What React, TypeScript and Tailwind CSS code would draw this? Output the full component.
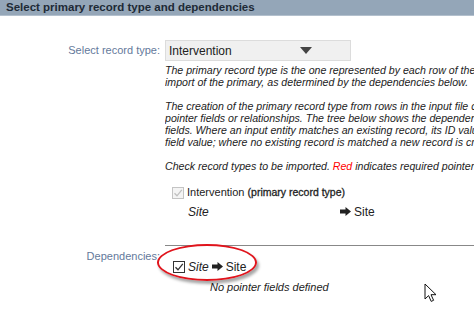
import React from 'react';

const Arrow = () => (
  <svg width="11" height="9" viewBox="0 0 11 9" className="inline-block">
    <path d="M0 2.5h5.5V0L11 4.5 5.5 9V6.5H0z" fill="#222" />
  </svg>
);

const Check: React.FC<{ disabled?: boolean }> = ({ disabled }) => (
  <span
    className={
      'inline-flex w-[12px] h-[12px] items-center justify-center border ' +
      (disabled ? 'border-[#c4c4c4] bg-[#f4f4f4]' : 'border-[#333] bg-white')
    }
  >
    <svg width="10" height="10" viewBox="0 0 10 10">
      <path
        d="M1.5 5.2 4 7.8 8.8 1.8"
        fill="none"
        stroke={disabled ? '#c0c0c0' : '#333'}
        strokeWidth="1.3"
      />
    </svg>
  </span>
);

const Cursor = () => (
  <svg width="14" height="20" viewBox="0 0 14 20" className="absolute left-[424px] top-[283px]">
    <path
      d="M1 1v15l3.6-3.4 2.6 5.8 2.4-1.1-2.6-5.6H12z"
      fill="#fff"
      stroke="#111"
      strokeWidth="1"
      strokeLinejoin="round"
    />
  </svg>
);

export default function App() {
  return (
    <div className="relative w-[474px] h-[320px] overflow-hidden bg-white font-['Liberation_Sans',Arial,sans-serif] text-[#222]">
      {/* Header */}
      <div className="h-[16px] bg-[#94a6b8] border-b border-[#b3c0cd] px-[6px] text-[11.5px] leading-[15px] font-bold text-[#1e2a36] whitespace-nowrap">
        Select primary record type and dependencies
      </div>

      {/* Record type */}
      <div className="flex mt-[24px]">
        <div className="w-[165px] shrink-0 pr-[5px] text-right text-[11px] leading-[21px] text-[#64799b]">
          Select record type:
        </div>
        <div className="w-[186px] h-[21px] shrink-0 bg-[#f0f0f0] border border-[#dcdcdc] flex items-center justify-between pl-[3px] pr-[38px]">
          <span className="text-[12px] text-[#222]">Intervention</span>
          <svg width="12" height="7" viewBox="0 0 12 7">
            <path d="M0 0h12L6 7z" fill="#444" />
          </svg>
        </div>
      </div>

      <div className="flex">
        <div className="w-[165px] shrink-0" />
        <div className="flex-1 min-w-0 overflow-hidden">
          <div className="mt-[3px] text-[10.6px] leading-[12px] italic whitespace-nowrap">
            <div>The primary record type is the one represented by each row of the input file.</div>
            <div>import of the primary, as determined by the dependencies below.</div>
            <div className="h-[12px]" />
            <div>The creation of the primary record type from rows in the input file creates</div>
            <div>pointer fields or relationships. The tree below shows the dependencies and</div>
            <div>fields. Where an input entity matches an existing record, its ID value is used</div>
            <div>field value; where no existing record is matched a new record is created</div>
            <div className="h-[12px]" />
            <div>
              Check record types to be imported. <span className="text-[#ff0000]">Red</span> indicates required pointer fields
            </div>
          </div>

          <div className="mt-[14px] pl-[7px] flex items-center gap-[3px] h-[13px]">
            <Check disabled />
            <span className="text-[11px] text-[#222] whitespace-nowrap">
              Intervention <span className="text-[10.5px] text-[#222] [-webkit-text-stroke:0.3px_#222]">(primary record type)</span>
            </span>
          </div>
          <div className="mt-[6px] flex items-center h-[13px] text-[12px]">
            <span className="pl-[23px] w-[175px] italic">Site</span>
            <span className="flex items-center gap-[3px]">
              <Arrow />
              <span>Site</span>
            </span>
          </div>
        </div>
      </div>

      {/* Dependencies */}
      <div className="flex mt-[27px]">
        <div className="w-[165px] shrink-0 pr-[5px] pt-[4px] text-right text-[11px] leading-[14px] text-[#64799b]">
          Dependencies:
        </div>
        <div className="flex-1 border-t border-[#888]">
          <div className="relative mt-[14px] pl-[8px] flex items-center gap-[3px] h-[13px] text-[12px]">
            <Check />
            <span className="italic">Site</span>
            <Arrow />
            <span>Site</span>
            <span className="absolute left-[-8px] top-[-16px] w-[100px] h-[37px] rounded-[50%] border-2 border-[#e0141c] shadow-[2px_3px_3px_rgba(0,0,0,0.35)]" />
          </div>
          <div className="mt-[8px] pl-[45px] text-[11px] leading-[12px] italic">No pointer fields defined</div>
        </div>
      </div>

      <Cursor />
    </div>
  );
}
